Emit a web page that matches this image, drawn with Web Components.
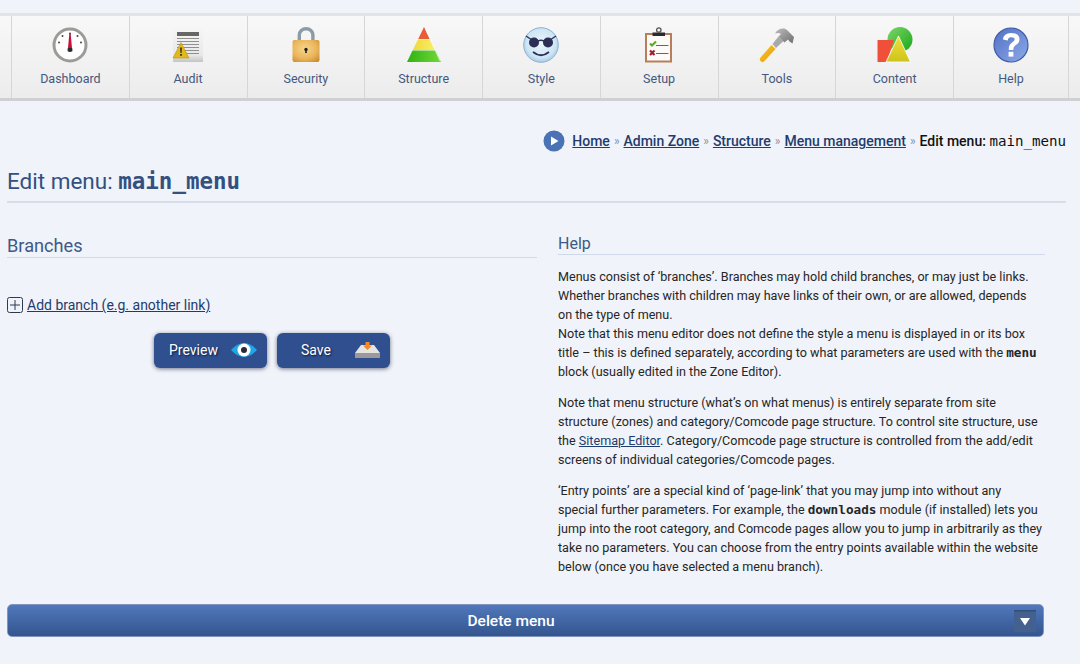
<!DOCTYPE html>
<html lang="en">
<head>
<meta charset="utf-8">
<title>Edit menu</title>
<style>
  html, body { margin: 0; padding: 0; }
  body { background: #f0f3f9; font-family: Roboto, "Liberation Sans", sans-serif; width: 1080px; height: 664px; overflow: hidden; }
  bread-crumbs kbd { font-family: "DejaVu Sans Mono", monospace; font-size: 14.150px; font-weight: 400; }
</style>
</head>
<body>
<admin-nav>
  <nav-item label="Dashboard" icon="dashboard"></nav-item>
  <nav-item label="Audit" icon="audit"></nav-item>
  <nav-item label="Security" icon="security"></nav-item>
  <nav-item label="Structure" icon="structure"></nav-item>
  <nav-item label="Style" icon="style"></nav-item>
  <nav-item label="Setup" icon="setup"></nav-item>
  <nav-item label="Tools" icon="tools"></nav-item>
  <nav-item label="Content" icon="content"></nav-item>
  <nav-item label="Help" icon="help"></nav-item>
</admin-nav>
<bread-crumbs>
  <a href="#">Home</a><i>»</i><a href="#">Admin Zone</a><i>»</i><a href="#">Structure</a><i>»</i><a href="#">Menu management</a><i>»</i><b>Edit menu: <kbd>main_menu</kbd></b>
</bread-crumbs>
<page-title>Edit menu: <kbd>main_menu</kbd></page-title>
<two-cols>
  <branch-pane slot="left"></branch-pane>
  <help-pane slot="right"></help-pane>
</two-cols>
<delete-bar>Delete menu</delete-bar>

<script>
const ICONS = {
  dashboard: `<svg width="36" height="36" viewBox="0 0 36 36">
    <circle cx="18" cy="18" r="16" fill="#fff" stroke="#9c9b98" stroke-width="3"/>
    <g fill="#444"><circle cx="18" cy="6.500" r="1"/><circle cx="10.500" cy="9" r="1"/><circle cx="25.500" cy="9" r="1"/><circle cx="7" cy="15.500" r="1"/><circle cx="29" cy="15.500" r="1"/></g>
    <path d="M16 21 L17.400 6 H18.600 L20 21 Z" fill="#c8103a"/><path d="M15.800 21 H20.200 L20.500 24 Q18 26 15.500 24 Z" fill="#2c2c2c"/></svg>`,
  audit: `<svg width="36" height="36" viewBox="0 0 36 36">
    <defs><linearGradient id="au" x1="0" y1="0" x2="0" y2="1"><stop offset="0" stop-color="#f6f6f6"/><stop offset=".8" stop-color="#e8e8e8"/><stop offset="1" stop-color="#c4c4c4"/></linearGradient></defs>
    <rect x="3" y="0" width="30" height="35" fill="url(#au)"/>
    <rect x="7" y="5" width="22" height="4" fill="#666"/>
    <g stroke="#8f8f8f" stroke-width="1.100"><path d="M7 11.500h22M7 14.500h22M7 17.500h22M7 20.500h22M7 23.500h22M7 26.500h22"/></g>
    <path d="M3 31 L11 15.500 L19 31 Z" fill="#e2b81a" stroke="#b79210" stroke-width=".6"/>
    <path d="M10.200 20.500h1.600l-.3 5.500h-1z M10.200 27h1.600v1.700h-1.600z" fill="#222"/></svg>`,
  security: `<svg width="36" height="36" viewBox="0 0 36 36">
    <defs><radialGradient id="se" cx=".45" cy=".4" r=".75"><stop offset="0" stop-color="#f6d68a"/><stop offset=".6" stop-color="#eab55a"/><stop offset="1" stop-color="#c98a30"/></radialGradient></defs>
    <path d="M11.300 15 V8 a6.800 6.300 0 0 1 13.600 0 V15" fill="none" stroke="#8d9ba6" stroke-width="3.400"/>
    <rect x="4.500" y="13" width="27" height="22" rx="2" fill="url(#se)"/>
    <circle cx="18" cy="22.500" r="1.700" fill="#222"/><path d="M17.400 23h1.200l.3 3h-1.800z" fill="#222"/></svg>`,
  structure: `<svg width="36" height="36" viewBox="0 0 36 36">
    <defs><linearGradient id="sg" x1="0" y1="0" x2="1" y2="0"><stop offset="0" stop-color="#2eb312"/><stop offset="1" stop-color="#74d63a"/></linearGradient>
    <linearGradient id="sy" x1="0" y1="0" x2="1" y2="0"><stop offset="0" stop-color="#f3d83a"/><stop offset="1" stop-color="#f6ee6a"/></linearGradient></defs>
    <path d="M18 0 L23.800 12 H12.200 Z" fill="#e85d36"/>
    <path d="M12 12.500 H24 L29.200 23 H6.800 Z" fill="url(#sy)"/>
    <path d="M6.500 23.500 H29.500 L35 35 H1 Z" fill="url(#sg)"/>
    <path d="M20 3 L34 34" stroke="#fff" stroke-opacity=".6" stroke-width="1"/></svg>`,
  style: `<svg width="36" height="36" viewBox="0 0 36 36">
    <defs><radialGradient id="st" cx=".5" cy=".45" r=".6"><stop offset="0" stop-color="#eaf6fc"/><stop offset=".7" stop-color="#cde6f4"/><stop offset="1" stop-color="#9cc0dc"/></radialGradient></defs>
    <circle cx="18" cy="18" r="17.300" fill="url(#st)" stroke="#8fb0d0"/>
    <path d="M3 9 L9 13 M33 9 L27 13 M15 14 Q18 12.500 21 14" stroke="#2c2f55" stroke-width="1.400" fill="none"/>
    <circle cx="11" cy="15.500" r="5" fill="#2c2f55"/><circle cx="25" cy="15.500" r="5" fill="#2c2f55"/>
    <path d="M10 25 Q18 31.500 26 25" stroke="#2c2f55" stroke-width="1.700" fill="none"/></svg>`,
  setup: `<svg width="36" height="36" viewBox="0 0 36 36">
    <rect x="5" y="7" width="25" height="27.500" fill="#fdfbf8" stroke="#b87e5a" stroke-width="2"/>
    <path d="M11.500 9 V5.500 H24 V9 Z" fill="#2a2a2e"/><circle cx="17.800" cy="3" r="2.200" fill="none" stroke="#555" stroke-width="1.300"/>
    <path d="M9 16.500 L11 18.500 L15 14.500" stroke="#5bab32" stroke-width="2.200" fill="none"/>
    <path d="M9 23.500 L13.500 28 M13.500 23.500 L9 28" stroke="#a51c2e" stroke-width="2.200" fill="none"/>
    <path d="M15 18.500H27.500M15 26.500H27.500" stroke="#666" stroke-width="1.200"/></svg>`,
  tools: `<svg width="36" height="36" viewBox="0 0 36 36">
    <defs><linearGradient id="to" x1="0" y1="0" x2="1" y2="1"><stop offset="0" stop-color="#bdbdbd"/><stop offset="1" stop-color="#6f6f6f"/></linearGradient>
    <linearGradient id="th" x1="0" y1="0" x2="1" y2="1"><stop offset="0" stop-color="#f7c920"/><stop offset="1" stop-color="#e89a10"/></linearGradient></defs>
    <path d="M13.500 17 L19.500 9.500 L24.500 14 L17 21 Z" fill="#a9a9a9"/>
    <path d="M12.500 18 L16.500 22 L5 34.500 Q3 36 1.500 34 Q0 32.500 1.500 30.500 Z" fill="url(#th)"/>
    <path d="M16 6.500 Q19 1 25.500 1.500 L28 3 L35 10 L33.500 16.500 L30.500 14.500 L29 12.500 L25.500 15.500 L19.500 9.500 L22 7 Q20 5.500 16 6.500 Z" fill="url(#to)"/></svg>`,
  content: `<svg width="36" height="36" viewBox="0 0 36 36">
    <defs><linearGradient id="cg" x1="0" y1="0" x2="1" y2="1"><stop offset="0" stop-color="#7fd66a"/><stop offset="1" stop-color="#17a818"/></linearGradient>
    <linearGradient id="cy" x1="0" y1="0" x2="0" y2="1"><stop offset="0" stop-color="#ece23a"/><stop offset="1" stop-color="#cfc21c"/></linearGradient></defs>
    <circle cx="23" cy="12.500" r="12.500" fill="url(#cg)"/>
    <path d="M.5 13 H17 L10 35 H.5 Z" fill="#f0503a"/>
    <path d="M21.500 9 L33.500 35 H9 Z" fill="url(#cy)" stroke="#fff" stroke-width=".8"/></svg>`,
  help: `<svg width="36" height="36" viewBox="0 0 36 36">
    <defs><linearGradient id="he" x1="0" y1="0" x2="1" y2="1"><stop offset="0" stop-color="#4f70c4"/><stop offset="1" stop-color="#8faaea"/></linearGradient></defs>
    <circle cx="18" cy="18" r="17" fill="url(#he)" stroke="#3f5ca8" stroke-width="1.200"/>
    <path d="M10 12.500 Q10.500 6 18 6 Q26.500 6 26.500 12.500 Q26.500 16 22.500 18.300 Q20.200 19.700 20.200 23 H15.800 Q15.500 18 18.800 15.800 Q21.700 14 21.700 12.500 Q21.700 10.200 18 10.200 Q15 10.200 14.800 13.500 Z" fill="#fff"/>
    <rect x="15.600" y="24.800" width="4.800" height="4.800" fill="#fff"/></svg>`
};

class AdminNav extends HTMLElement {
  constructor() {
    super();
    this.attachShadow({ mode: 'open' }).innerHTML = `
      <style>
        :host { display: block; margin-top: 13px; height: 82px; border-top: 3px solid #e3e4e7; border-bottom: 3px solid #cfd0d4;
                background: linear-gradient(#f8f8f8, #ececec); }
        div { display: grid; grid-template-columns: repeat(8, 117.75px) 116px; height: 100%; padding-left: 11px; }
      </style>
      <div><slot></slot></div>`;
  }
}
customElements.define('admin-nav', AdminNav);

class NavItem extends HTMLElement {
  constructor() {
    super();
    this.attachShadow({ mode: 'open' });
  }
  connectedCallback() {
    const label = this.getAttribute('label');
    const icon = ICONS[this.getAttribute('icon')];
    this.shadowRoot.innerHTML = `
      <style>
        :host { display: flex; flex-direction: column; align-items: center; box-sizing: border-box;
                border-left: 1px solid #d6d6d6; padding-top: 11px; color: #44587e; font-size: 12.5px; }
        :host(:last-child) { border-right: 1px solid #d6d6d6; }
        svg { display: block; }
        span { margin-top: 8px; line-height: 15px; }
      </style>
      ${icon}<span>${label}</span>`;
  }
}
customElements.define('nav-item', NavItem);

class BreadCrumbs extends HTMLElement {
  constructor() {
    super();
    this.attachShadow({ mode: 'open' }).innerHTML = `
      <style>
        :host { display: flex; justify-content: flex-end; align-items: center; height: 24px; margin-top: 28px; padding-right: 14px;
                font-size: 14px; font-weight: 500; color: #111; }
        svg { margin-right: 7px; }
        ::slotted(a) { color: #1f3c6e; text-decoration: underline; }
        ::slotted(i) { font-style: normal; font-weight: 400; color: #8a94a8; margin: 0 4px; font-size: 12px; }
        ::slotted(b) { font-weight: 500; }
      </style>
      <svg width="22" height="22" viewBox="0 0 22 22"><circle cx="11" cy="11" r="10.500" fill="#4a72b4"/><path d="M8 6.500 L15.500 11 L8 15.500 Z" fill="#fff"/></svg>
      <slot></slot>`;
  }
}
customElements.define('bread-crumbs', BreadCrumbs);

class PageTitle extends HTMLElement {
  constructor() {
    super();
    this.attachShadow({ mode: 'open' }).innerHTML = `
      <style>
        :host { display: block; margin: 13px 14px 0 7px; height: 35px; border-bottom: 2px solid #d5deea;
                color: #33507f; font-size: 22.500px; font-weight: 400; line-height: 30px; }
        ::slotted(kbd) { font-family: "DejaVu Sans Mono", monospace; font-weight: 700; }
      </style>
      <slot></slot>`;
  }
}
customElements.define('page-title', PageTitle);

class TwoCols extends HTMLElement {
  constructor() {
    super();
    this.attachShadow({ mode: 'open' }).innerHTML = `
      <style>
        :host { display: grid; grid-template-columns: 530px 487px; column-gap: 21px; padding-left: 7px; }
      </style>
      <slot name="left"></slot><slot name="right"></slot>`;
  }
}
customElements.define('two-cols', TwoCols);

class BranchPane extends HTMLElement {
  constructor() {
    super();
    this.attachShadow({ mode: 'open' }).innerHTML = `
      <style>
        :host { display: block; }
        h2 { margin: 31px 0 0; font-size: 18.200px; font-weight: 400; line-height: 24px; height: 23px; color: #3e5a85; border-bottom: 1px solid #cfd9ea; }
        .add { display: flex; align-items: center; gap: 4px; margin-top: 38px; height: 18px; font-size: 14px; color: #1f3c6e; }
        .add a { color: inherit; text-decoration: underline; }
        .btns { display: flex; justify-content: center; gap: 10px; margin-top: 19px; }
        .btn { box-sizing: border-box; width: 113px; height: 35px; display: flex; align-items: center; justify-content: space-between;
               padding: 0 10px 1px 15px; border-radius: 6px; background: #304f8f; color: #fff; font-size: 14px;
               text-shadow: 1px 1px 2px #0a1a3a; box-shadow: 0 1px 4px rgba(40,50,80,.65); }
        .save { padding-left: 24px; }
      </style>
      <h2>Branches</h2>
      <div class="add">
        <svg width="16" height="16" viewBox="0 0 16 16"><rect x=".5" y=".5" width="15" height="15" rx="2" fill="none" stroke="#2c3a54"/><path d="M3 8h10M8 3v10" stroke="#2c3a54"/></svg>
        <a href="#">Add branch (e.g. another link)</a>
      </div>
      <div class="btns">
        <div class="btn"><span>Preview</span>
          <svg width="26" height="16" viewBox="0 0 26 16"><path d="M0 8 Q13 -6 26 8 Q13 22 0 8 Z" fill="#1fa8e8"/><circle cx="13" cy="8" r="6.500" fill="#fff"/><circle cx="13" cy="8" r="3" fill="#2a2a33"/></svg></div>
        <div class="btn save"><span>Save</span>
          <svg width="25" height="16" viewBox="0 0 25 16"><path d="M6 3 H19 L25 11 H0 Z" fill="#e4e4e4"/><rect x="0" y="11" width="25" height="5" fill="#9a9a9a"/><path d="M10.500 0h4v3.500h2.500l-4.500 4.500-4.500-4.500h2.500z" fill="#f08a24"/></svg></div>
      </div>`;
  }
}
customElements.define('branch-pane', BranchPane);

class HelpPane extends HTMLElement {
  constructor() {
    super();
    this.attachShadow({ mode: 'open' }).innerHTML = `
      <style>
        :host { display: block; color: #262626; font-size: 12.580px; line-height: 18.900px; }
        h2 { margin: 30px 0 0; font-size: 16px; font-weight: 400; line-height: 22px; height: 21px; color: #3e5a85; border-bottom: 1px solid #cfd9ea; }
        p { margin: 0 0 12.500px; }
        p:first-of-type { margin-top: 13px; }
        code { font-family: "DejaVu Sans Mono", monospace; font-size: 12.700px; font-weight: 700; line-height: 1; }
        a { color: #1f3c6e; text-decoration: underline; }
      </style>
      <h2>Help</h2>
      <p>Menus consist of ‘branches’. Branches may hold child branches, or may just be links.<br>
      Whether branches with children may have links of their own, or are allowed, depends<br>
      on the type of menu.<br>
      Note that this menu editor does not define the style a menu is displayed in or its box<br>
      title – this is defined separately, according to what parameters are used with the <code>menu</code><br>
      block (usually edited in the Zone Editor).</p>
      <p>Note that menu structure (what’s on what menus) is entirely separate from site<br>
      structure (zones) and category/Comcode page structure. To control site structure, use<br>
      the <a href="#">Sitemap Editor</a>. Category/Comcode page structure is controlled from the add/edit<br>
      screens of individual categories/Comcode pages.</p>
      <p>‘Entry points’ are a special kind of ‘page-link’ that you may jump into without any<br>
      special further parameters. For example, the <code>downloads</code> module (if installed) lets you<br>
      jump into the root category, and Comcode pages allow you to jump in arbitrarily as they<br>
      take no parameters. You can choose from the entry points available within the website<br>
      below (once you have selected a menu branch).</p>`;
  }
}
customElements.define('help-pane', HelpPane);

class DeleteBar extends HTMLElement {
  constructor() {
    super();
    this.attachShadow({ mode: 'open' }).innerHTML = `
      <style>
        :host { display: block; box-sizing: border-box; width: 1037px; height: 33px; margin: 15px 0 0 7px; border-radius: 5px;
                border: 1px solid #7f95bd; background: linear-gradient(#5078bb, #34558f); color: #fff;
                font-size: 15.500px; font-weight: 500; }
        div { display: flex; align-items: center; height: 100%; }
        span { flex: 1; text-align: center; padding-left: 0; }
        svg { margin-right: 7px; }
      </style>
      <div><span><slot></slot></span>
      <svg width="22" height="22" viewBox="0 0 22 22"><rect width="22" height="22" fill="#44608f"/><path d="M0 0H22V1.500H0Z" fill="#344d7a"/><path d="M6 8 H16 L11 15.500 Z" fill="#fff"/></svg></div>`;
  }
}
customElements.define('delete-bar', DeleteBar);
</script>
</body>
</html>
